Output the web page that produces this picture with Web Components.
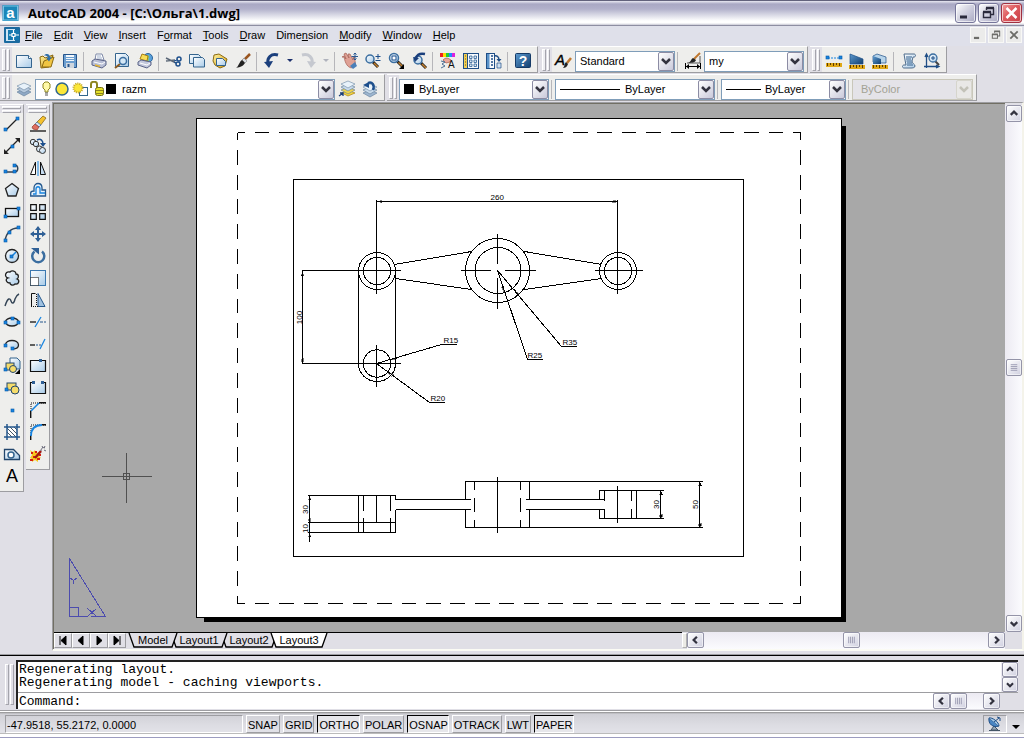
<!DOCTYPE html>
<html lang="en">
<head>
<meta charset="utf-8">
<title>AutoCAD 2004 - [C:\Ольга\1.dwg]</title>
<style>
html, body { height: 100%; margin: 0; }
body { font: 11px/14px "Liberation Sans", Arial, sans-serif; color: #000; background: #e0dfe6; --face: #e0dfe6; --line: #9d9da1; overflow: hidden; }
</style>
</head>
<body>
<cad-app>
  <title-bar slot="top">AutoCAD 2004 - [C:\Ольга\1.dwg]</title-bar>
  <menu-bar slot="top"></menu-bar>
  <dock-row slot="top">
    <tool-bar>
      <tool-button icon="new" label="New"></tool-button><tool-button icon="open" label="Open"></tool-button><tool-button icon="save" label="Save"></tool-button><tool-gap></tool-gap>
      <tool-button icon="print" label="Plot"></tool-button><tool-button icon="preview" label="Plot Preview"></tool-button><tool-button icon="publish" label="Publish"></tool-button><tool-gap></tool-gap>
      <tool-button icon="cut" label="Cut"></tool-button><tool-button icon="copy" label="Copy"></tool-button><tool-button icon="paste" label="Paste"></tool-button><tool-button icon="brush" label="Match Properties"></tool-button><tool-gap></tool-gap>
      <tool-button icon="undo" label="Undo"></tool-button><tool-button narrow icon="drop" label="Undo list"></tool-button><tool-button icon="redo" label="Redo"></tool-button><tool-button narrow icon="dropoff" label="Redo list"></tool-button><tool-gap></tool-gap>
      <tool-button icon="pan" label="Pan"></tool-button><tool-button icon="zoom" label="Zoom Realtime"></tool-button><tool-button icon="zoomwin" label="Zoom Window"></tool-button><tool-button icon="zoomprev" label="Zoom Previous"></tool-button><tool-gap></tool-gap>
      <tool-button icon="props" label="Properties"></tool-button><tool-button icon="design" label="DesignCenter"></tool-button><tool-button icon="palettes" label="Tool Palettes"></tool-button><tool-gap></tool-gap>
      <tool-button icon="help" label="Help"></tool-button>
    </tool-bar>
    <tool-bar>
      <tool-button icon="textstyle" label="Text Style"></tool-button>
      <combo-box label="Text style" value="Standard" style="width:100px"></combo-box><tool-gap></tool-gap>
      <tool-button icon="dimstyle" label="Dimension Style"></tool-button>
      <combo-box label="Dimension style" value="my" style="width:100px"></combo-box>
    </tool-bar>
    <tool-bar>
      <tool-button icon="distance" label="Distance"></tool-button><tool-button icon="area" label="Area"></tool-button><tool-button icon="mass" label="Mass Properties"></tool-button><tool-gap></tool-gap>
      <tool-button icon="list" label="List"></tool-button><tool-button icon="locate" label="Locate Point"></tool-button>
    </tool-bar>
  </dock-row>
  <dock-row slot="top">
    <tool-bar>
      <tool-button icon="layers" label="Layer Manager"></tool-button>
      <combo-box label="Layer" value="razm" style="width:300px;--indent:86px"><layer-state></layer-state></combo-box>
      <tool-button icon="makelayer" label="Make Object's Layer Current"></tool-button><tool-button icon="layerprev" label="Layer Previous"></tool-button>
    </tool-bar>
    <tool-bar>
      <combo-box label="Color" value="ByLayer" style="width:150px;--indent:19px"><color-swatch></color-swatch></combo-box><tool-gap></tool-gap>
      <combo-box label="Linetype" value="ByLayer" style="width:160px;--indent:69px"><line-sample style="width:60px"></line-sample></combo-box><tool-gap></tool-gap>
      <combo-box label="Lineweight" value="ByLayer" style="width:125px;--indent:43px"><line-sample style="width:35px"></line-sample></combo-box><tool-gap></tool-gap>
      <combo-box label="Plot style" value="ByColor" disabled style="width:121px;--indent:8px"></combo-box>
    </tool-bar>
  </dock-row>

  <tool-bar vertical slot="side">
    <tool-button icon="line" label="Line"></tool-button><tool-button icon="xline" label="Construction Line"></tool-button><tool-button icon="pline" label="Polyline"></tool-button><tool-button icon="polygon" label="Polygon"></tool-button><tool-button icon="rect" label="Rectangle"></tool-button><tool-button icon="arc" label="Arc"></tool-button><tool-button icon="circle" label="Circle"></tool-button><tool-button icon="cloud" label="Revision Cloud"></tool-button><tool-button icon="spline" label="Spline"></tool-button><tool-button icon="ellipse" label="Ellipse"></tool-button><tool-button icon="ellarc" label="Ellipse Arc"></tool-button><tool-button icon="insert" label="Insert Block"></tool-button><tool-button icon="block" label="Make Block"></tool-button><tool-button icon="point" label="Point"></tool-button><tool-button icon="hatch" label="Hatch"></tool-button><tool-button icon="region" label="Region"></tool-button><tool-button icon="mtext" label="Multiline Text"></tool-button>
  </tool-bar>
  <tool-bar vertical slot="side">
    <tool-button icon="erase" label="Erase"></tool-button><tool-button icon="copyobj" label="Copy Object"></tool-button><tool-button icon="mirror" label="Mirror"></tool-button><tool-button icon="offset" label="Offset"></tool-button><tool-button icon="array" label="Array"></tool-button><tool-button icon="move" label="Move"></tool-button><tool-button icon="rotate" label="Rotate"></tool-button><tool-button icon="scale" label="Scale"></tool-button><tool-button icon="stretch" label="Stretch"></tool-button><tool-button icon="trim" label="Trim"></tool-button><tool-button icon="extend" label="Extend"></tool-button><tool-button icon="break1" label="Break at Point"></tool-button><tool-button icon="break2" label="Break"></tool-button><tool-button icon="chamfer" label="Chamfer"></tool-button><tool-button icon="fillet" label="Fillet"></tool-button><tool-button icon="explode" label="Explode"></tool-button>
  </tool-bar>

  <drawing-window slot="main">
    <cad-drawing></cad-drawing>
    <scroll-bar slot="vscroll" vertical style="--before:236;--after:239"></scroll-bar>
    <layout-tabs slot="tabs"></layout-tabs>
    <scroll-bar slot="hscroll" style="--before:140;--after:128"></scroll-bar>
  </drawing-window>
  <command-window slot="bottom"></command-window>
  <status-bar slot="bottom"></status-bar>
</cad-app>

<script>
const define = (name, css, html, setup) => customElements.define(name, class extends HTMLElement {
  constructor() {
    super();
    this.attachShadow({ mode: 'open' }).innerHTML = `<style>:host,*{box-sizing:border-box}${css}</style>${html}`;
  }
  connectedCallback() { if (setup && !this.ready) { this.ready = true; setup(this, this.shadowRoot); } }
});

const defs = `<defs>
<linearGradient id="g" x1="0" y1="0" x2="1" y2="1"><stop offset="0" stop-color="#fff"/><stop offset="1" stop-color="#a8cbe8"/></linearGradient>
<linearGradient id="n" x1="0" y1="0" x2="1" y2="1"><stop offset="0" stop-color="#5d9bd0"/><stop offset="1" stop-color="#123f70"/></linearGradient>
<linearGradient id="y" x1="0" y1="0" x2="1" y2="1"><stop offset="0" stop-color="#fff3a0"/><stop offset="1" stop-color="#d79c10"/></linearGradient></defs>`;
const dot = (x, y) => `<rect x="${x}" y="${y}" width="3" height="3" fill="#1784e0" stroke="#075aa8" stroke-width=".6"/>`;
const ruler = y => `<rect x="0" y="${y}" width="16" height="4" fill="#e0a818"/><path d="M1.5 ${y}v3M4.5 ${y}v2M7.5 ${y}v3M10.5 ${y}v2M13.5 ${y}v3" stroke="#5b3b00"/>`;
const lens = (x, y, r) => `<path d="M${x + r - 1} ${y + r - 1}l5 5" stroke="#222" stroke-width="3" /><path d="M${x + r} ${y + r}l4 4" stroke="#c8812a" stroke-width="1.5"/><circle cx="${x}" cy="${y}" r="${r}" fill="url(#g)" stroke="#3b6ea0" stroke-width="1.5"/>`;
const sheets = (a, b) => `<path d="M1 11l7-3 7 3-7 4z" fill="${b}" stroke="#6d86a0" stroke-width=".7"/><path d="M1 8l7-3 7 3-7 4z" fill="${a}" stroke="#6d86a0" stroke-width=".7"/><path d="M1 5l7-3 7 3-7 4z" fill="#e8f2fa" stroke="#7a93ac" stroke-width=".7"/>`;
const icons = {
  new: `<path d="M0.5 2.5h12l3 3v9h-15z" fill="url(#g)" stroke="#34648e"/><path d="M12.500 2.500v3h3" fill="#fff" stroke="#34648e"/>`,
  open: `<path d="M1 4l3-1 2 2 8-3-4 12-8 1z" fill="url(#y)" stroke="#8b6a12"/><path d="M5 8l10-4-3 10H3z" fill="#f0c542" stroke="#8b6a12"/><path d="M5 2.500c3-3 6-1 6 2l2-1-3 5-3-4 2 .5c0-2-2-2.500-4-2.500z" fill="#2f6ea8"/>`,
  save: `<path d="M1.500 1.500h13v13h-12l-1-1z" fill="#6d9fd0" stroke="#26558c"/><path d="M4 2h8v6H4z" fill="#f3f7fb"/><path d="M4 4.500h8M4 6.500h8" stroke="#6d9fd0"/><path d="M4 10h8v5H4z" fill="#cfd6de"/><path d="M5.500 11h2v3h-2z" fill="#26558c"/>`,
  print: `<path d="M4 7l1-6h6l2 6z" fill="#fff" stroke="#7f8aa8"/><path d="M6 3h4M6 5h5" stroke="#9fb0cc"/><path d="M1 8l3-2 11 2v4l-4 3L1 12z" fill="#b9bfd6" stroke="#5b6488"/><path d="M3 9l8 2 3-2" fill="none" stroke="#fff"/><path d="M4 12l5 1.500" stroke="#e0b030" stroke-width="1.500"/>`,
  preview: `<path d="M1.500 .5h10l3 3v10h-13z" fill="url(#g)" stroke="#34648e"/><path d="M6 11l-5 4" stroke="#8a5a20" stroke-width="2"/><circle cx="9" cy="8" r="3.500" fill="#d5e8f6" stroke="#3b6ea0" stroke-width="1.500"/>`,
  publish: `<circle cx="11" cy="5" r="4.500" fill="#5aa1dc" stroke="#2c659c"/><path d="M9 3c2-2 4 0 3 2s1 3-1 4" fill="#8ccb6a"/><path d="M3 6l2-5 6 2-1 5z" fill="#f8de55" stroke="#a87f14"/><path d="M1 9l3-2 10 2v3l-4 3-9-3z" fill="#c3c8dc" stroke="#5b6488"/><path d="M3 10l7 2 3-2" fill="none" stroke="#fff"/>`,
  cut: `<path d="M0 5l10 5M0 8l9-1" stroke="#5c6878" stroke-width="1.500"/><circle cx="13" cy="6" r="2" fill="none" stroke="#1d4f8c" stroke-width="1.500"/><circle cx="12" cy="11" r="2" fill="none" stroke="#1d4f8c" stroke-width="1.500"/><path d="M8 8l3-1M8 9l2 1" stroke="#1d4f8c"/>`,
  copy: `<path d="M.5 1.500h9l2 2v7H.5z" fill="url(#g)" stroke="#34648e"/><path d="M4.500 4.500h9l2 2v7.500h-11z" fill="url(#g)" stroke="#34648e"/>`,
  paste: `<path d="M1 8l1-6 5-1 8 5-2 7-5 2-5-3z" fill="url(#y)" stroke="#8b6a12"/><path d="M4.500 5.500h6l3 3v4h-9z" fill="url(#g)" stroke="#34648e"/>`,
  brush: `<path d="M15 1L8 8" stroke="#9a5620" stroke-width="2.500"/><path d="M9 5l3 3-2 2-3-3z" fill="#d8dde2" stroke="#777" stroke-width=".5"/><path d="M7 7l3 3c-2 3-4 4-9 5 3-2 3-6 6-8z" fill="#222"/>`,
  undo: `<path d="M14 2C7 0 3 5 4 10" fill="none" stroke="#1b3f7c" stroke-width="3"/><path d="M0 9l9-1-4 7z" fill="#1b3f7c"/>`,
  redo: `<path d="M2 2c7-2 11 3 10 8" fill="none" stroke="#c5c8cf" stroke-width="3"/><path d="M16 9l-9-1 4 7z" fill="#c5c8cf"/>`,
  drop: `<path d="M5 6h6l-3 3z" fill="#1b2f6c"/>`,
  dropoff: `<path d="M5 6h6l-3 3z" fill="#b0b3bd"/>`,
  pan: `<path d="M0 4l2-1 2 3-2-5 2-1 3 5-1-4 2 0 3 6 0-3 1.500 0 1 7-4 4c-4-1-6-4-7.500-11z" fill="#dfa195" stroke="#a35c50" stroke-width=".7"/><path d="M8 13l5-4 2 4-4 3z" fill="#4a7fb8"/><path d="M13 0v7M9.500 3.500h6.500M11.500 1.500l1.500-1.500 1.500 1.500M11.500 5.500l1.500 1.500 1.500-1.500" stroke="#2a5a94" fill="none"/>`,
  zoom: lens(5, 6, 4) + `<path d="M10.500 3.500h5M13 1v5M10.500 7.500h5" stroke="#1d4f8c"/>`,
  zoomwin: lens(6, 5, 4.500) + `<rect x="4" y="3" width="4" height="4" fill="#fff" stroke="#1d4f8c"/><path d="M11 16h5v-5z" fill="#000"/>`,
  zoomprev: lens(7, 7, 4) + `<path d="M14 1C9 0 6 2 5 5" fill="none" stroke="#1b3f7c" stroke-width="2.500"/><path d="M2 4l6 1-4 4z" fill="#1b3f7c"/>`,
  props: `<path d="M0 0h3v4H0z" fill="#e22"/><path d="M3 0h3v4H3z" fill="#fd0"/><path d="M6 0h3v4H6z" fill="#2c3"/><path d="M9 0h3v4H9z" fill="#28f"/><path d="M12 0h3v4h-3z" fill="#d2d"/><path d="M3 7c3-3 5-2 8 0l-1 2-4 1z" fill="#e8a79a" stroke="#a35c50" stroke-width=".7"/><path d="M1 8l4 1-3 2 3 2-4 2" fill="none" stroke="#4d6f94"/><text x="8" y="15" font-size="10" font-family="Liberation Sans" fill="#111">A</text>`,
  design: `<rect x=".5" y=".5" width="15" height="15" fill="#f7fafd" stroke="#1f4e86"/><path d="M1 1h3v14H1z" fill="#f0cf57"/><path d="M4.500 1v14" stroke="#1f4e86"/><path d="M2 3h1M2 6h1M2 9h1M2 12h1" stroke="#7b5c00"/><g fill="#dceaf6" stroke="#2f6096" stroke-width=".8"><path d="M6.500 3h2.500v2.500H6.500zM11 3h2.500v2.500H11zM6.500 7h2.500v2.500H6.500zM11 7h2.500v2.500H11zM6.500 11h2.500v2.500H6.500zM11 11h2.500v2.500H11z"/></g>`,
  palettes: `<rect x=".5" y=".5" width="8" height="15" fill="#f7fafd" stroke="#1f4e86"/><path d="M1 1h2.500v14H1z" fill="#5a93c8"/><path d="M5 3h2M5 6h2M5 9h2M5 12h2" stroke="#1f4e86" stroke-width="1.500"/><path d="M8 3c3-1 5 1 5 4" fill="none" stroke="#1f4e86" stroke-width="1.500"/><path d="M10.500 6h5L13 9z" fill="#1f4e86"/><path d="M11 10h4v5h-4z" fill="#cfe1f1" stroke="#1f4e86" stroke-width=".7"/>`,
  help: `<rect x=".5" y=".5" width="15" height="14" rx="1" fill="url(#n)" stroke="#153a66"/><text x="8" y="13" text-anchor="middle" font-size="14" font-weight="700" font-family="Liberation Sans" fill="#fff">?</text>`,
  textstyle: `<text x="-1" y="12" font-size="15" font-style="italic" font-family="Liberation Sans" fill="#000" stroke="#000" stroke-width=".4">A</text><path d="M15 5l-4 5" stroke="#c07830" stroke-width="2.500"/><path d="M10 9l2 2c-1 3-3 4-5 4 2-2 1-4 3-6z" fill="#222"/>`,
  dimstyle: `<path d="M15 0L9 6" stroke="#c07830" stroke-width="2"/><path d="M8 5l3 2c-1 3-5 3-8 3 3-1 3-4 5-5z" fill="#222"/><path d="M2 10h13V3" stroke="#555"/><path d="M.5 10v6M15.500 10v6M1 13.500h14" stroke="#000"/><path d="M4 11v5l-3-2.500zM12 11v5l3-2.500z" fill="#000"/>`,
  distance: `<path d="M2 5h12" stroke="#1784e0" stroke-dasharray="2 1"/>${dot(0, 3)}${dot(13, 3)}${ruler(10)}`,
  area: `<path d="M1 1l13 5v5H1z" fill="url(#n)" stroke="#1d4f86" stroke-width=".7"/>${ruler(12)}`,
  mass: `<path d="M1 3l4-2 9 3v6H9L1 9z" fill="#b7d4ea" stroke="#1d4f86" stroke-width=".7"/><path d="M1 3l8 3v5H1z" fill="url(#n)"/>${ruler(12)}`,
  list: `<path d="M3 1h10c2 0 2 3 0 3h-1l-1 4c0 3 3 3 3 5s-3 2-4 2H3c-2 0-2-3 0-3h2l-1-5z" fill="url(#g)" stroke="#4f6d8c"/><path d="M5 4h6M5 6h5M5.500 8h5M6 10h5M6 12h6" stroke="#34608c"/>`,
  locate: `<path d="M2.500 15V2M1 4l1.500-3L4 4M0 13.500h14M12 12l3 1.500-3 1.500" stroke="#1f4e86" stroke-width="1.300" fill="none"/><path d="M11 8l4 4" stroke="#444" stroke-width="2"/><circle cx="9" cy="5" r="4" fill="url(#g)" stroke="#3b6ea0" stroke-width="1.300"/><path d="M9 3v4M7 5h4" stroke="#1f4e86"/>`,
  layers: sheets('#b7cade', '#8fa9c6'),
  makelayer: `<path d="M3 12l6-3 7 3-7 3z" fill="#f5d63c" stroke="#a87f14" stroke-width=".7"/><g transform="translate(1 -2)">${sheets('#c9dcec', '#f0d44a')}</g><path d="M0 15l4-3M1 12h3v3" stroke="#1b3f7c" fill="none" stroke-width="1.300"/>`,
  layerprev: `<g transform="translate(0 1)">${sheets('#c9dcec', '#9db6d0')}</g><path d="M11 9c2-5-1-9-5-7" fill="none" stroke="#1d4f8c" stroke-width="2.500"/><path d="M1 4l6-3v6z" fill="#1d4f8c"/>`,
  line: `<path d="M2 14L13 3" stroke="#222" stroke-width="1.300"/>${dot(0, 12)}${dot(12, 1)}`,
  xline: `<path d="M1 15L15 1" stroke="#222" stroke-width="1.300"/><path d="M0 16v-5l5 5zM16 0v5l-5-5z" fill="#222"/>${dot(7, 7)}`,
  pline: `<path d="M1 12h9c5 0 5-7 0-7" fill="none" stroke="#345" stroke-width="1.500"/>${dot(0, 10)}${dot(9, 10)}${dot(9, 4)}`,
  polygon: `<path d="M8 1.500l6.500 5-2.500 7.500H4L1.500 6.500z" fill="url(#g)" stroke="#222" stroke-width="1.300"/>`,
  rect: `<rect x="1.500" y="4.500" width="13" height="8" fill="url(#g)" stroke="#111" stroke-width="1.300"/>${dot(0, 11)}${dot(13, 3)}`,
  arc: `<path d="M1 15C2 7 7 2 14 2" fill="none" stroke="#345" stroke-width="1.500"/>${dot(0, 13)}${dot(4, 5)}${dot(13, 0)}`,
  circle: `<circle cx="8" cy="8" r="6.500" fill="url(#g)" stroke="#222" stroke-width="1.300"/><path d="M8 8l4-4" stroke="#1784e0" stroke-width="1.500"/>${dot(6, 7)}`,
  cloud: `<path d="M4 8C0 7 1 1 6 2c2-2 6-1 6 2 3 0 3 4 1 5 3 1 2 6-2 5-2 2-5 1-5-1-4 0-5-4-2-5z" fill="url(#g)" stroke="#222" stroke-width="1.300"/>`,
  spline: `<path d="M1 14c3-9 5-8 6-5s3 3 4-2c1-3 2-4 4-5" fill="none" stroke="#345" stroke-width="1.400"/>`,
  ellipse: `<ellipse cx="8" cy="8" rx="6.500" ry="4" fill="url(#g)" stroke="#222" stroke-width="1.300"/>${dot(0, 7)}${dot(13, 7)}${dot(7, 3)}`,
  ellarc: `<path d="M1.500 9c0-6 13-6 13 0 0 3-3 4-6 4" fill="url(#g)" stroke="#222" stroke-width="1.300"/>${dot(0, 8)}${dot(7, 11)}`,
  insert: `<path d="M6 0h7l3 3v8H6z" fill="url(#g)" stroke="#34648e"/><rect x="2" y="5" width="8" height="7" fill="#f5dc6a" stroke="#22466c"/><circle cx="9" cy="11" r="3.500" fill="#f5dc6a" stroke="#22466c"/>${dot(0, 10)}<path d="M11 16h5v-5z" fill="#000"/>`,
  block: `<rect x="3" y="3" width="9" height="7" fill="#f5dc6a" stroke="#22466c"/><circle cx="11" cy="10" r="4" fill="#f5dc6a" stroke="#22466c"/>${dot(1, 8)}`,
  point: dot(7, 7),
  hatch: `<rect x="3" y="3" width="10" height="10" fill="#fff"/><path d="M3 4l9 9M3 8l5 5M6 3l7 7M10 3l3 3" stroke="#456"/><path d="M3 0v16M13 0v16M0 3h16M0 13h16" stroke="#24578c" stroke-width="1.500"/>`,
  region: `<path d="M.500 3.500h9l6 6v4H.5z" fill="url(#g)" stroke="#22466c" stroke-width="1.300"/><circle cx="7" cy="9" r="3" fill="#fff" stroke="#34648e" stroke-width="1.500"/>`,
  mtext: `<text x="8" y="14" text-anchor="middle" font-size="18" font-family="Liberation Sans" fill="#000">A</text>`,
  erase: `<path d="M0 15h16" stroke="#222" stroke-width="1.400"/><path d="M13 0l3 2-6 8-4-3z" fill="#f5c22e" stroke="#7c5a10" stroke-width=".7"/><path d="M7 6l4 3-2 2-4-3z" fill="#cfe3f4" stroke="#3b6ea0" stroke-width=".7"/><path d="M5 8l4 3-2 3-4-1-1-2z" fill="#e07060" stroke="#93382a" stroke-width=".7"/>`,
  copyobj: `<g fill="url(#g)" stroke="#333"><circle cx="3" cy="4" r="2.700"/><circle cx="6" cy="6" r="2.700"/><circle cx="9.500" cy="11" r="3"/><circle cx="12.500" cy="12.500" r="3"/></g><path d="M7 2c4-2 6 1 6 4" fill="none" stroke="#1d4f8c" stroke-width="1.500"/><path d="M10 5h6l-3 4z" fill="#1d4f8c"/>`,
  mirror: `<path d="M5.500 2v12.500H.500z" fill="#fff" stroke="#111"/><path d="M10.500 2v12.500h5z" fill="#c6dcf0" stroke="#111"/><path d="M8 1v15" stroke="#1784e0"/>`,
  offset: `<path d="M.7 14v-3c0-2 2-2 3.300-2V6c0-6 8-6 8 0v2h3.500v6z" fill="#e6f1fa" stroke="#24578c" stroke-width="1.300"/><path d="M3 12h3V7c0-3 4-3 4 0v4h5" fill="none" stroke="#1784e0" stroke-width="1.300"/>`,
  array: `<g fill="url(#g)" stroke="#111" stroke-width="1.200"><path d="M.7.7h5.600v5.600H.7zM9.700.7h5.600v5.600H9.700zM.7 9.700h5.600v5.600H.7zM9.700 9.700h5.600v5.600H9.700z"/></g>`,
  move: `<path d="M8 1v14M1 8h14" stroke="#2f6096" stroke-width="2"/><path d="M8 0l3 4H5zM8 16l3-4H5zM0 8l4-3v6zM16 8l-4-3v6z" fill="#2f6096"/>`,
  rotate: `<path d="M4.500 3.500a6 6 0 1 0 7.500 0" fill="none" stroke="#3b6ea0" stroke-width="2.500"/><path d="M1 0h8v6.500z" fill="#2f6096"/>`,
  scale: `<rect x=".5" y=".5" width="15" height="15" fill="url(#g)" stroke="#3b78b0"/><path d="M.5 7.500h8v8h-8z" fill="#fff" stroke="#000" stroke-dasharray="1 1"/>`,
  stretch: `<path d="M8 1.500l7 13H8z" fill="#9fc1e0" stroke="#24578c"/><path d="M1.500 14.500v-13h4" fill="none" stroke="#111"/><path d="M1 14.500h7M6.500 2v12" fill="none" stroke="#111" stroke-dasharray="1 1"/>`,
  trim: `<path d="M0 8h6" stroke="#111" stroke-width="1.300"/><path d="M10 8h6" stroke="#24578c" stroke-dasharray="3 1"/><path d="M5 13L11 3" stroke="#1784e0" stroke-width="1.300"/>`,
  extend: `<path d="M0 9h5" stroke="#111" stroke-width="1.300"/><path d="M6 9h5" stroke="#24578c" stroke-dasharray="2 1"/><path d="M10 13l5-10" stroke="#1784e0" stroke-width="1.300"/>`,
  break1: `<path d="M.5 2.500h15v11H.5z" fill="url(#g)" stroke="#111" stroke-width="1.200"/><rect x="9" y="1" width="3" height="3" fill="#2f6096"/>`,
  break2: `<path d="M3 2.500H.5v11h15v-11H13" fill="url(#g)" stroke="#111" stroke-width="1.200"/><rect x="2" y="1" width="3" height="3" fill="#2f6096"/><rect x="11" y="1" width="3" height="3" fill="#2f6096"/>`,
  chamfer: `<path d="M1 9V1h15" fill="none" stroke="#111" stroke-dasharray="1 1"/><path d="M.7 16V9M9 .7h7" stroke="#111" stroke-width="1.400"/><path d="M1 9l8-8" stroke="#1784e0" stroke-width="1.600"/>`,
  fillet: `<path d="M1 9V1h15" fill="none" stroke="#111" stroke-dasharray="1 1"/><path d="M.7 16v-5M11 .7h5" stroke="#111" stroke-width="1.400"/><path d="M1 12C1 5 5 1 12 1" fill="none" stroke="#1784e0" stroke-width="1.800"/>`,
  explode: `<path d="M0 4l3 2 2-2 1 3 4-1-1 4 2 2-3 1 0 3-3-2-3 2-0-3-2-1 2-3z" fill="#f6c81e"/><path d="M1 6h2v2H1zM5 5h2v2H5zM0 13h3v2H0zM7 12h3v2H7zM9 8h2v2H9zM3 10h2v2H3z" fill="#d81e10"/><path d="M5 12l6-7" stroke="#a01810" stroke-width="2.500"/><path d="M11 5c0-3 2-4 4-3M12 0l1 2M14 4l2 1M15 0l-1 2" stroke="#667" fill="none"/>`
};

define('cad-app', `
:host{display:flex;flex-direction:column;height:100vh}
.top,.bottom{flex:none}
.middle{flex:1;min-height:0;display:flex}
.side{display:flex;align-items:flex-start;gap:2px;padding:2px 2px 0 0}
.main{flex:1;min-width:0;display:flex}`,
`<header class="top"><slot name="top"></slot></header>
<div class="middle"><div class="side"><slot name="side"></slot></div><main class="main"><slot name="main"></slot></main></div>
<footer class="bottom"><slot name="bottom"></slot></footer>`);

define('window-button', `
:host{display:block}
button{display:block;width:21px;height:20px;padding:0;border:1px solid #76769a;border-radius:3px;background:linear-gradient(135deg,#fff,#d4d4e2 45%,#a9a9c2);box-shadow:inset 0 0 0 1px #ffffffaa}
:host([kind=close]) button{background:linear-gradient(135deg,#f0a0a0,#de5a5e 45%,#c84048);border-color:#a03040}
:host([small]) button{width:16px;height:16px;border-color:#f8f8f6;border-radius:0;background:#ebebea;box-shadow:none}
svg{display:block;width:100%;height:100%}`,
`<button><svg viewBox="0 0 19 18" fill="none"></svg></button>`,
(host, root) => {
  const small = host.hasAttribute('small'), kind = host.getAttribute('kind');
  const c = small ? '#6c6c68' : '#2a2a3c';
  root.querySelector('button').setAttribute('aria-label', kind);
  const svg = root.querySelector('svg');
  svg.innerHTML = {
    minimize: `<path d="M4 13h7" stroke="${c}" stroke-width="3"/>`,
    restore: `<path d="M7.500 6V4.500h7v6H12M4.500 8.500h7v5h-7zM4 7.500h8M7 3.500h8" stroke="${c}" stroke-width="1.400"/>`,
    close: `<path d="M4.500 4l10 10M14.500 4l-10 10" stroke="${small ? c : '#fff'}" stroke-width="2.500"/>`
  }[kind];
});

define('title-bar', `
:host{display:flex;align-items:center;height:26px;padding:0 2px;border-top:1px solid #62627c;border-bottom:1px solid #8e8ea2;background:linear-gradient(#e8e8f2 0,#a9a8c4 3px,#b2b1cb 8px,#e6e6ee 16px,#fff 20px,#fff 22px,#c8c8d4 24px)}
svg{flex:none;width:17px;height:16px}
h1{flex:1;margin:0 0 0 9px;font:bold 13px/16px "Open Sans","Liberation Sans",sans-serif;white-space:nowrap}
.buttons{display:flex;gap:2px}`,
`<svg viewBox="0 0 16 16" aria-hidden="true"><rect width="16" height="16" fill="#1b86b8"/><rect x="1" y="1" width="14" height="14" fill="none" stroke="#79c3e4"/><text x="8" y="13" text-anchor="middle" font-size="15" font-weight="700" font-family="Liberation Sans" fill="#fff">a</text></svg>
<h1><slot></slot></h1>
<div class="buttons"><window-button kind="minimize"></window-button><window-button kind="restore"></window-button><window-button kind="close"></window-button></div>`);

define('menu-bar', `
:host{display:flex;align-items:center;height:20px;padding:0 2px 2px 4px;background:#dfe0ea}
svg{flex:none;width:16px;height:16px}
nav{flex:1;display:flex;gap:11px;padding-left:5px}
a{color:#000;text-decoration:none}
u{text-underline-offset:1px}
.buttons{display:flex;gap:2px}`,
`<svg viewBox="0 0 16 16" aria-hidden="true"><rect width="16" height="16" rx="1" fill="#1a6aa0"/><path d="M2 2h9v12H2z" fill="#cfe6f6"/><path d="M4 3h11v10H4z" fill="#1579b0"/><path d="M9.500 3v3M9.500 10v3M5 8h3M11 8h4M8 6.500h3v3H8z" stroke="#fff" stroke-width="1.200" fill="none"/></svg>
<nav>${'_File _Edit _View _Insert F_ormat _Tools _Draw Dime_nsion _Modify _Window _Help'.split(' ').map(t => `<a href="#">${t.replace(/_(.)/, '<u>$1</u>')}</a>`).join('')}</nav>
<div class="buttons"><window-button small kind="minimize"></window-button><window-button small kind="restore"></window-button><window-button small kind="close"></window-button></div>`);

define('dock-row', `:host{display:flex;gap:2px;height:28px;padding-bottom:1px}`, `<slot></slot>`);

define('tool-bar', `
:host{display:flex;flex:none;border:solid;border-width:1px 1px 1px 0;border-color:#fff var(--line) var(--line) #fff;background:#eeeeec}
.grip{flex:none;display:flex;gap:1px;width:12px;padding:2px 2px 1px;background:var(--face)}
.grip i{flex:1;border:1px solid;border-color:#fff #a4a4ac #a4a4ac #fff;background:#eeeef2}
.items{display:flex;align-items:center;padding:3px 3px 0 0}
:host([vertical]){flex-direction:column;width:24px}
:host([vertical]) .grip{flex-direction:column;width:auto;height:8px;padding:1px 2px 0}
:host([vertical]) .items{flex-direction:column;padding:0 0 4px}`,
`<div class="grip"><i></i><i></i></div><div class="items"><slot></slot></div>`);

define('tool-gap', `:host{display:block;width:1px;height:19px;margin:0 3px 0 2px;background:#b6b6ba}`, ``);

define('tool-button', `
:host{display:block}
button{display:flex;align-items:center;justify-content:center;width:23px;height:22px;padding:0;border:0;background:none}
:host([narrow]) button{width:13px}
svg{flex:none;width:16px;height:16px;overflow:visible}`,
`<button><svg viewBox="0 0 16 16" fill="none"></svg></button>`,
(host, root) => {
  const b = root.querySelector('button');
  b.setAttribute('aria-label', host.getAttribute('label'));
  b.title = host.getAttribute('label');
  root.querySelector('svg').innerHTML = defs + icons[host.getAttribute('icon')];
});

define('combo-box', `
:host{display:grid;grid-template-columns:minmax(0,1fr);height:21px;border:1px solid #7f9db9;background:#fff}
select,.extra,.arrow{grid-area:1/1;align-self:stretch;min-width:0}
select{appearance:none;width:100%;height:19px;padding:0 18px 0 var(--indent,4px);border:0;background:none;font:inherit;color:#000}
.extra{display:flex;align-items:center;padding-left:4px;pointer-events:none}
.arrow{justify-self:end;width:16px;border:1px solid #8c8ca4;border-radius:2px;background:linear-gradient(135deg,#fff,#c9c9da);color:#33333f;pointer-events:none}
.arrow svg{display:block;width:100%;height:100%}
:host([disabled]){border-color:#c9c7ba;background:#e4e3e8}
:host([disabled]) select{color:#a3a295;opacity:1}
:host([disabled]) .arrow{border-color:#d6d5cc;background:#e9e8e6;color:#c3c2b8}`,
`<select></select><div class="extra"><slot></slot></div><div class="arrow"><svg viewBox="0 0 14 17" fill="none"><path d="M3 6l4 4 4-4" stroke="currentColor" stroke-width="2.500"/></svg></div>`,
(host, root) => {
  const s = root.querySelector('select');
  s.setAttribute('aria-label', host.getAttribute('label'));
  s.disabled = host.hasAttribute('disabled');
  s.add(new Option(host.getAttribute('value')));
});
define('color-swatch', `:host{display:block;width:10px;height:10px;background:#000}`, ``);
define('line-sample', `:host{display:block;height:1px;background:#000}`, ``);
define('layer-state', `:host{display:block;line-height:0}svg{width:76px;height:16px}`,
`<svg viewBox="0 0 76 16" fill="none" aria-hidden="true">
<path d="M5 1h3l2 2v4l-2 2v2H5V9L3 7V3z" fill="#fff9a8" stroke="#8d8520"/><path d="M5 12h3M5 14h3" stroke="#555"/>
<circle cx="22" cy="8" r="6" fill="#fbe739" stroke="#31668c" stroke-width="1.500"/>
<rect x="39.500" y="6.500" width="8" height="8" fill="#fff" stroke="#31668c"/><circle cx="38" cy="7" r="4.500" fill="#fbe739" stroke="#c3a62a" stroke-dasharray="1 1" stroke-width="2"/>
<path d="M51 7V3c0-3 6-3 6 0v5" stroke="#8d8520" stroke-width="2"/><rect x="55.500" y="6.500" width="8" height="8" rx="2" fill="#e3df29" stroke="#77711a"/><path d="M56 9.500h7M56 12.500h7" stroke="#8d8520"/>
<rect x="66" y="3" width="10" height="10" fill="#000"/></svg>`);

define('scroll-bar', `
:host{display:flex;min-width:0;min-height:0;background:linear-gradient(#eceaf2,#fbfbfe)}
button{flex:none;width:17px;height:16px;padding:0;border:1px solid #9494a8;border-radius:2px;background:linear-gradient(135deg,#fff,#d0d0e0);box-shadow:inset 0 0 0 1px #fff8}
svg{display:block;width:100%;height:100%}
.a{flex:var(--before) 1 0px}.b{flex:var(--after) 1 0px}
:host([vertical]){flex-direction:column;background:linear-gradient(90deg,#eceaf2,#fbfbfe)}
:host([vertical]) button{width:16px;height:17px;align-self:center}
:host([short]) button{height:15px}
:host([short]) .thumb{display:none}
:host([vertical]) svg{transform:rotate(90deg)}`,
`<button aria-label="Scroll back"><svg viewBox="0 0 15 15" fill="none"><path d="M9 4L5.500 7.500 9 11" stroke="#333340" stroke-width="2.400"/></svg></button><span class="a"></span>
<button class="thumb" aria-label="Scroll position"><svg viewBox="0 0 15 15"><path d="M4.500 4v7M6.500 4v7M8.500 4v7M10.500 4v7" stroke="#9a9ab2"/></svg></button><span class="b"></span>
<button aria-label="Scroll forward"><svg viewBox="0 0 15 15" fill="none"><path d="M6 4l3.500 3.500L6 11" stroke="#333340" stroke-width="2.400"/></svg></button>`);

define('drawing-window', `
:host{flex:1;min-width:0;display:grid;grid-template:minmax(0,1fr) 17px/minmax(0,1fr) 17px;border:solid;border-width:1px 2px 2px 1px;border-color:#9d9da1 #f4f3ea #fbfbf4 #9d9da1}
.view{display:flex;min-width:0;min-height:0;border:solid #716f64;border-width:1px 0 0 1px;overflow:hidden}
.v{display:flex;padding-top:2px}
.tabs{display:flex;min-width:0;border-left:1px solid #716f64}
.t{flex:628;min-width:0;display:flex;border-top:1px solid #000}
.split{flex:none;width:5px;margin:1px 0;border:1px solid;border-color:#fff #b0b0b0 #b0b0b0 #fff;background:#ecebe6}
.h{flex:318;display:flex;min-width:0}
::slotted(*){flex:1;min-width:0}
.corner{background:var(--face)}`,
`<div class="view"><slot></slot></div><div class="v"><slot name="vscroll"></slot></div>
<div class="tabs"><div class="t"><slot name="tabs"></slot></div><span class="split"></span><div class="h"><slot name="hscroll"></slot></div></div><div class="corner"></div>`);

const tab = (name, w, on, z) => `<button class="tab" style="width:${w - 6}px;z-index:${z}" role="tab" aria-selected="${on}"><svg width="${w}" height="15" aria-hidden="true"><path d="M0 0l5 14h${w - 10}l5-14" fill="${on ? '#fff' : '#e0dfe6'}" stroke="#000" stroke-width="1.300"/></svg><span style="width:${w}px">${name}</span></button>`;
define('layout-tabs', `
:host{display:flex;background:var(--face)}
button{padding:0;border:0;background:none;font:inherit;color:#000}
.step{width:18px;height:15px;border:1px solid;border-color:#fff #9d9da1 #9d9da1 #fff}
.step svg{display:block;width:100%;height:100%}
.tabs{display:flex;padding-left:3px}
.tab{display:grid;height:15px}
.tab svg,.tab span{grid-area:1/1}
.tab svg{overflow:visible}
.tab span{text-align:center;z-index:1}`,
`${['M5 2v9M11 2v9L6 6.500z', 'M10 2v9L5 6.500z', 'M6 2v9l5-4.500z', 'M11 2v9M5 2v9l5-4.500z'].map((d, i) => `<button class="step" aria-label="${['First', 'Previous', 'Next', 'Last'][i]} layout"><svg viewBox="0 0 16 13"><path d="${d}" stroke="#000"/></svg></button>`).join('')}
<div class="tabs" role="tablist">${tab('Model', 48, false, 3)}${tab('Layout1', 56, false, 2)}${tab('Layout2', 56, false, 1)}${tab('Layout3', 56, true, 4)}</div>`);

define('command-window', `
:host{display:block;background:var(--face);border-bottom:1px solid #fff}
.edge{height:5px;border-bottom:1px solid #000;box-shadow:inset 0 -1px #9d9da1}
.row{display:flex;padding:4px 6px 1px 5px;border-bottom:1px solid #9d9da1}
.grip{flex:none;display:flex;gap:1px;width:9px;margin:4px 2px 4px 0}
.grip i{flex:1;border:1px solid;border-color:#fff #a4a4ac #a4a4ac #fff}
.box{flex:1;min-width:0;border:solid;border-width:2px 0 0 2px;border-color:#222 #000 #000 #222}
.log,.entry{display:flex;background:#fff;font:13px/13px "Liberation Mono","Courier New",monospace}
.log{height:31px;border-bottom:1px solid #9d9da1}
.log pre{flex:1;margin:0;font:inherit;padding:1px 0 0 1px}
.log scroll-bar{width:17px}
.entry{height:16px;margin-right:18px;padding-left:1px;align-items:center}
.entry input{flex:1;min-width:0;height:14px;padding:0 4px;border:0;outline:0;background:none;font:inherit}
.entry scroll-bar{width:67px;height:16px}`,
`<div class="edge"></div><div class="row"><div class="grip"><i></i><i></i></div>
<div class="box"><div class="log"><pre>Regenerating layout.
Regenerating model - caching viewports.</pre><scroll-bar vertical short></scroll-bar></div>
<div class="entry"><label for="cmd">Command:</label><input id="cmd" type="text" autocomplete="off"><scroll-bar style="--before:0;--after:14"></scroll-bar></div></div></div>`);

define('status-toggle', `
:host{display:block}
button{height:18px;padding:1px 1px 0;border:1px solid;border-color:#fff #9d9da1 #9d9da1 #fff;background:none;font:inherit;color:#000}
:host([on]) button{border-color:#000 #fff #fff #000;padding:2px 0 0 1px;background:#e6e6ea}`,
`<button><slot></slot></button>`,
(host, root) => root.querySelector('button').setAttribute('aria-pressed', host.hasAttribute('on')));

define('status-bar', `
:host{display:flex;align-items:flex-start;gap:3px;height:26px;padding:3px 2px 0 5px;border-bottom:1px solid #9c9cc0;background:linear-gradient(#8c8c8c 0,#d0d0d6 2px,#dcdce2 50%,#e2e2e8 82%,#bbb 86%,#fff 90%,#fff)}
output{width:238px;height:18px;padding:1px;border:1px solid;border-color:#9d9da1 #fff #fff #9d9da1;line-height:16px;white-space:nowrap}
.fill{flex:1}
button{padding:0;border:0;background:none;height:18px}
.comm{width:24px;border:1px solid;border-color:#9d9da1 #fff #fff #9d9da1}
.menu{width:12px}
svg{display:block;margin:auto}`,
`<output>-47.9518, 55.2172, 0.0000</output>
<status-toggle>SNAP</status-toggle><status-toggle>GRID</status-toggle><status-toggle on>ORTHO</status-toggle><status-toggle>POLAR</status-toggle><status-toggle on>OSNAP</status-toggle><status-toggle>OTRACK</status-toggle><status-toggle>LWT</status-toggle><status-toggle on>PAPER</status-toggle>
<span class="fill"></span>
<button class="comm" aria-label="Communication Center"><svg width="16" height="16" viewBox="0 0 16 16" fill="none"><path d="M4 14l3-4 4 4z" fill="#9ab" stroke="#456"/><path d="M2 2c-1 6 4 10 10 8z" fill="#4a86c4" stroke="#1f4e86"/><path d="M2 2c3-1 10 4 10 8" fill="#a8cbe8" stroke="#1f4e86"/><path d="M7 6l5-4M10 1l3 1v3" stroke="#1f4e86"/><path d="M2 14.500h11" stroke="#456"/></svg></button>
<button class="menu" aria-label="Status bar menu"><svg width="10" height="16"><path d="M1 9h8l-4 4z"/></svg></button>`);

const seg = 'M376 199V293M301 270H400M301 363H400M376 344V386M358 270V363M395 270V363M302 270V363M376 201H617M617 199V293M594 270H642M497 233V263M497 277V308M460 270H490M504 270H535'
  + 'M394 264L471 251M395 278L471 289M524 251L601 264M524 289L601 278'
  + 'M497 270L527 359H542M497 270L561 346H576M376 363L441 344H456M376 363L429 402H444'
  + 'M307 495H395V499M395 509V532H307M307 522H395M358 495V532M363 495V510M363 517V532M376 495V522M390 495V510M390 517V532M309 495V541'
  + 'M395 499H470M395 509H470M465 499V481H702M465 509V527H702M529 481V499M529 509V527M497 476V532'
  + 'M474 481V489M474 497V511M474 519V527M520 481V489M520 497V511M520 519V527'
  + 'M525 499H603M525 509H603M599 499V490H663M599 509V518H663M636 490V518M617 485V522M604 490V500M604 508V518M631 490V500M631 508V518M660 490V518M699 481V527';
define('cad-drawing', `:host{display:block;background:#a8a8a8}svg{display:block;width:100%;height:100%}text{font:8px/8px "Liberation Sans",sans-serif;fill:#000;stroke:none}`,
`<svg role="img" aria-label="Paper space layout with a lever drawing">
<g transform="translate(-53.5 -103.500)" fill="none" stroke="#000" shape-rendering="crispEdges">
<path d="M204 126H845V621H204z" fill="#000"/>
<rect x="196" y="118" width="645" height="499" fill="#fff"/>
<path d="M237 132H800" pathLength="115" stroke-dasharray="3 2" stroke-dashoffset="1.500"/><path d="M237 603H800" pathLength="115" stroke-dasharray="3 2" stroke-dashoffset="1.500"/>
<path d="M237 132V603" pathLength="95" stroke-dasharray="3 2" stroke-dashoffset="1.500"/><path d="M800 132V603" pathLength="95" stroke-dasharray="3 2" stroke-dashoffset="1.500"/>
<rect x="293" y="179" width="450" height="377"/>
<circle cx="376.500" cy="270.500" r="18.500"/><circle cx="376.500" cy="270.500" r="13.700"/>
<circle cx="617.500" cy="270.500" r="18.500"/><circle cx="617.500" cy="270.500" r="13.700"/>
<circle cx="497" cy="270" r="32"/><circle cx="497.500" cy="270" r="23"/>
<path d="M358 363a18.500 18 0 0 0 37 0"/><circle cx="376.500" cy="363" r="13.700"/>
<path d="${seg}"/>
<g fill="#000" stroke-width=".5"><path d="M376 201l5-1v2zM617 201l-5-1v2zM302 270l-1 5h2zM302 363l-1-5h2zM504 292l-3-6 2-1zM518 294l-5-4 1-2zM390 359l6-3v2zM388 372l5 3-1 1z"/>
<path d="M309 495l-1 4h2zM309 522l-1-4h2zM309 532l-1 4h2zM660 490l-1 4h3zM660 518l-1-4h3zM699 481l-1 4h3zM699 527l-1-4h3z"/></g>
<g><text x="490" y="199">260</text><text x="443" y="342">R15</text><text x="430" y="400">R20</text><text x="527" y="357">R25</text><text x="562" y="344">R35</text>
<text text-anchor="middle" transform="translate(301 317) rotate(-90)">100</text><text text-anchor="middle" transform="translate(307 509) rotate(-90)">30</text><text text-anchor="middle" transform="translate(307 528) rotate(-90)">10</text><text text-anchor="middle" transform="translate(658 504) rotate(-90)">30</text><text text-anchor="middle" transform="translate(697 504) rotate(-90)">50</text></g>
<g stroke="#505050"><path d="M101 476H151M126 452V502"/><rect x="123" y="473" width="6" height="6"/></g>
<path d="M69 576V558L105 616H90M87 616H69V577M69 607H78V616M73 583V580L69 577M73 580L77 577M87 608L96 616M96 608L87 616" stroke="#4c4cae"/>
</g></svg>`);
</script>
</body>
</html>
